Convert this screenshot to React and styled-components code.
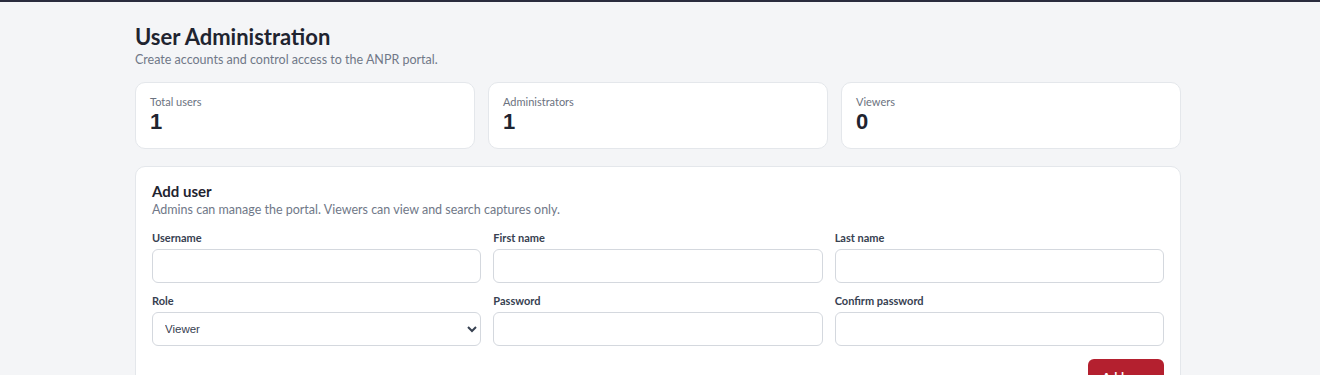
import styled, { createGlobalStyle } from "styled-components";

const GlobalStyle = createGlobalStyle`
  html, body {
    margin: 0;
    padding: 0;
    background: #f4f5f7;
    font-family: Lato, "Noto Sans", sans-serif;
    color: #1f2430;
  }
  * { box-sizing: border-box; }
`;

const stats = [
  { label: "Total users", value: 1 },
  { label: "Administrators", value: 1 },
  { label: "Viewers", value: 0 },
];

export default function App() {
  return (
    <>
      <GlobalStyle />
      <TopBar />
      <Page>
        <Title>User Administration</Title>
        <Subtitle>Create accounts and control access to the ANPR portal.</Subtitle>

        <StatGrid>
          {stats.map((s) => (
            <StatCard key={s.label}>
              <StatLabel>{s.label}</StatLabel>
              <StatValue>{s.value}</StatValue>
            </StatCard>
          ))}
        </StatGrid>

        <Panel>
          <PanelTitle>Add user</PanelTitle>
          <PanelText>
            Admins can manage the portal. Viewers can view and search captures only.
          </PanelText>

          <FormGrid>
            <Field>
              <Label>Username</Label>
              <Input type="text" />
            </Field>
            <Field>
              <Label>First name</Label>
              <Input type="text" />
            </Field>
            <Field>
              <Label>Last name</Label>
              <Input type="text" />
            </Field>
            <Field>
              <Label>Role</Label>
              <Select defaultValue="viewer">
                <option value="viewer">Viewer</option>
                <option value="admin">Administrator</option>
              </Select>
            </Field>
            <Field>
              <Label>Password</Label>
              <Input type="password" />
            </Field>
            <Field>
              <Label>Confirm password</Label>
              <Input type="password" />
            </Field>
          </FormGrid>

          <Actions>
            <Button>Add user</Button>
          </Actions>
        </Panel>
      </Page>
    </>
  );
}

const TopBar = styled.div`
  height: 2px;
  background: #2a2c3d;
`;

const Page = styled.main`
  max-width: 1050px;
  margin: 0 auto;
  padding: 21px 4px 0 0;
`;

const Title = styled.h1`
  margin: 0;
  font-size: 22px;
  line-height: 28px;
  font-weight: 700;
  color: #1f2430;
`;

const Subtitle = styled.p`
  margin: 0;
  font-size: 12.5px;
  line-height: 18px;
  color: #707888;
`;

const StatGrid = styled.div`
  display: grid;
  grid-template-columns: repeat(3, 1fr);
  gap: 13px;
  margin-top: 13px;
`;

const StatCard = styled.div`
  background: #fff;
  border: 1px solid #e4e7eb;
  border-radius: 10px;
  padding: 12px 14px;
  height: 67px;
`;

const StatLabel = styled.div`
  font-size: 11px;
  line-height: 14px;
  color: #6b7280;
`;

const StatValue = styled.div`
  font-family: "Liberation Sans", Arial, sans-serif;
  font-size: 22px;
  line-height: 26px;
  font-weight: 700;
  color: #1f2430;
`;

const Panel = styled.section`
  margin-top: 17px;
  background: #fff;
  border: 1px solid #e4e7eb;
  border-radius: 10px;
  padding: 14px 16px 16px;
`;

const PanelTitle = styled.h2`
  margin: 0;
  font-size: 15px;
  line-height: 20px;
  font-weight: 700;
  color: #1f2430;
`;

const PanelText = styled.p`
  margin: 0;
  font-size: 12.5px;
  line-height: 18px;
  color: #707888;
`;

const FormGrid = styled.div`
  display: grid;
  grid-template-columns: repeat(3, 1fr);
  column-gap: 12px;
  row-gap: 11px;
  margin-top: 12px;
`;

const Field = styled.label`
  display: flex;
  flex-direction: column;
  gap: 4px;
`;

const Label = styled.span`
  font-size: 11px;
  line-height: 14px;
  font-weight: 700;
  color: #374151;
`;

const Input = styled.input`
  height: 34px;
  border: 1px solid #d4d8de;
  border-radius: 6px;
  padding: 0 12px;
  font-size: 12px;
  background: #fff;
  outline: none;
`;

const Select = styled.select`
  height: 34px;
  border: 1px solid #d4d8de;
  border-radius: 6px;
  padding: 0 8px;
  font-family: "Liberation Sans", Arial, sans-serif;
  font-size: 11.5px;
  color: #374151;
  background: #fff;
  outline: none;
`;

const Actions = styled.div`
  display: flex;
  justify-content: flex-end;
  margin-top: 13px;
`;

const Button = styled.button`
  height: 34px;
  padding: 0 14px;
  border: none;
  border-radius: 6px;
  background: #b4202f;
  color: #fff;
  font-family: Lato, "Noto Sans", sans-serif;
  font-size: 12px;
  font-weight: 700;
  cursor: pointer;
`;
